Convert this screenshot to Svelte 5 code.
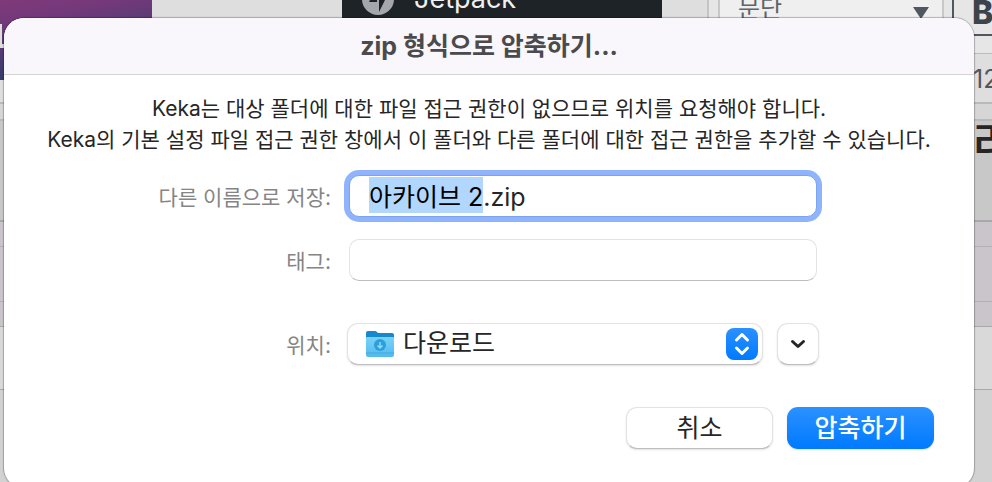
<script lang="ts">
  import { onMount } from "svelte";

  let name = $state("아카이브 2.zip");
  let tags = $state("");
  let place = $state("downloads");
  let nameInput: HTMLInputElement;

  onMount(() => {
    nameInput.focus();
    nameInput.setSelectionRange(0, name.lastIndexOf("."));
  });
</script>

<div class="desktop">
  <div class="page" aria-hidden="true">
    <div class="top">
      <div class="tile"></div>
      <div class="menu">
        <svg class="jetpack" viewBox="0 0 32 32">
          <circle cx="16" cy="16" r="16" fill="#a5a7ab" />
          <path d="M15 3v16H7zM17 29V13h8z" fill="#1d2327" />
        </svg>
        <span>Jetpack</span>
      </div>
      <div class="toolbar">
        <div class="format">
          <span>문단</span>
          <svg class="triangle" viewBox="0 0 16 12">
            <path d="M0 0h16L8 12z" fill="#50575e" />
          </svg>
        </div>
        <div class="bold">B</div>
      </div>
    </div>
    <div class="size-row"><span class="edge">12</span></div>
    <div class="gap-row"></div>
    <div class="heading-row"><span class="edge">라</span></div>
    <div class="band">
      <div class="band-inner"></div>
    </div>
    <div class="row"></div>
    <div class="rest"></div>
  </div>

  <div class="dialog" role="dialog" aria-labelledby="title">
    <h1 class="title" id="title">zip 형식으로 압축하기...</h1>

    <p class="message">
      Keka는 대상 폴더에 대한 파일 접근 권한이 없으므로 위치를 요청해야 합니다.<br />
      Keka의 기본 설정 파일 접근 권한 창에서 이 폴더와 다른 폴더에 대한 접근 권한을 추가할 수 있습니다.
    </p>

    <form onsubmit={(e) => e.preventDefault()}>
      <div class="fields">
        <label for="name">다른 이름으로 저장:</label>
        <input
          class="text focused"
          id="name"
          type="text"
          spellcheck="false"
          autocomplete="off"
          bind:this={nameInput}
          bind:value={name}
        />

        <label for="tags">태그:</label>
        <input class="text" id="tags" type="text" bind:value={tags} />

        <label class="place-label" for="place">위치:</label>
        <div class="place">
          <div class="popup">
            <svg class="folder" viewBox="0 0 30 28">
              <defs>
                <linearGradient id="front" x1="0" y1="0" x2="0" y2="1">
                  <stop offset="0" stop-color="#79d3fa" />
                  <stop offset="1" stop-color="#52b9ee" />
                </linearGradient>
              </defs>
              <path
                d="M1 3q0-2 2-2h7q1 0 2 1l1 1h14q2 0 2 2v8H1z"
                fill="#1489cd"
              />
              <path d="M1 8q0-1 1-1h26q1 0 1 1v17q0 2-2 2H3q-2 0-2-2z" fill="url(#front)" />
              <path d="M1 23h28" stroke="#41a8df" />
              <circle cx="15" cy="15" r="6" fill="#2f9fd9" />
              <path
                d="M15 12v6M12.500 15.500l2.500 2.500 2.500-2.500"
                fill="none"
                stroke="#8bdcff"
                stroke-width="1.500"
              />
            </svg>
            <select id="place" bind:value={place}>
              <option value="downloads">다운로드</option>
            </select>
            <svg class="stepper" viewBox="0 0 32 32">
              <defs>
                <linearGradient id="blue" x1="0" y1="0" x2="0" y2="1">
                  <stop offset="0" stop-color="#2b91ff" />
                  <stop offset="1" stop-color="#007aff" />
                </linearGradient>
              </defs>
              <rect width="32" height="32" rx="8" fill="url(#blue)" />
              <path
                d="M10.500 12L16 6.500l5.500 5.500M10.500 20L16 25.500 21.500 20"
                fill="none"
                stroke="#fff"
                stroke-width="3"
                stroke-linecap="round"
                stroke-linejoin="round"
              />
            </svg>
          </div>
          <button class="expand" type="button" aria-label="펼치기">
            <svg viewBox="0 0 16 10">
              <path
                d="M2.500 2.500L8 7.500l5.500-5"
                fill="none"
                stroke="#262626"
                stroke-width="3"
                stroke-linecap="round"
                stroke-linejoin="round"
              />
            </svg>
          </button>
        </div>
      </div>

      <div class="actions">
        <button class="action" type="button">취소</button>
        <button class="action primary" type="submit">압축하기</button>
      </div>
    </form>
  </div>
</div>

<style>
  :global(body) {
    margin: 0;
  }

  * {
    box-sizing: border-box;
  }

  .desktop {
    display: grid;
    grid-template: 100vh / 100%;
    overflow: hidden;
    font-family: Inter, "Noto Sans CJK KR", sans-serif;
    color: #262626;
  }

  .page,
  .dialog {
    grid-area: 1 / 1;
    min-width: 0;
  }

  /* page behind the dialog */
  .page {
    display: flex;
    flex-direction: column;
    background: #d6d6d6;
  }

  .top {
    display: flex;
    flex: none;
    height: 54px;
    background: #dedede;
    border-bottom: 1px solid #bcbcbc;
  }

  /* hangs over the rows below */
  .tile {
    position: relative;
    width: 152px;
    height: 80px;
    padding-top: 24px;
    background: linear-gradient(170deg, #80397a 0%, #74397a 20%, #2c3c6c 85%);
  }

  .tile::before {
    content: "";
    display: block;
    width: 4px;
    height: 20px;
    border: solid #dedede;
    border-width: 0 0 4px 2px;
  }

  .menu {
    display: flex;
    align-items: flex-start;
    gap: 20px;
    width: 320px;
    margin-left: 190px;
    padding-left: 20px;
    background: #1d2327;
    color: #f0f0f1;
    font-size: 27px;
    line-height: 32px;
  }

  .menu span {
    margin-top: -17px;
  }

  .jetpack {
    width: 32px;
    height: 32px;
    margin-top: -17px;
  }

  .toolbar {
    display: flex;
    flex: 1;
    justify-content: space-between;
    margin-left: 45px;
    border-left: 2px solid #c4c4c4;
    background: #e6e6e6;
  }

  .format {
    display: flex;
    align-items: flex-start;
    justify-content: space-between;
    width: 226px;
    margin-left: 9px;
    padding: 0 13px 0 18px;
    border: solid #c8c8c8;
    border-width: 0 2px;
    background: #efefef;
    color: #606468;
    font-size: 24px;
    line-height: 18px;
  }

  .triangle {
    width: 16px;
    height: 12px;
    margin-top: 7px;
  }

  .bold {
    width: 40px;
    height: 36px;
    padding-left: 18px;
    border: solid #50575e;
    border-width: 0 0 2px 2px;
    font-size: 32px;
    font-weight: 800;
    line-height: 26px;
    color: #3c434a;
  }

  .size-row,
  .heading-row {
    display: flex;
    flex: none;
    justify-content: flex-end;
  }

  .edge {
    width: 19px;
    white-space: nowrap;
  }

  .size-row {
    height: 50px;
    border-bottom: 2px solid #bababa;
    background: #dedede;
    color: #50575e;
    font-size: 25px;
    line-height: 50px;
  }

  .gap-row {
    flex: none;
    height: 17px;
    border-bottom: 2px solid #bababa;
    background: #d6d6d6;
  }

  .heading-row {
    height: 101px;
    border-bottom: 2px solid #a8a8a8;
    background: #c8c8c8;
    font-size: 44px;
    font-weight: 500;
    line-height: 44px;
  }

  .band {
    flex: none;
    height: 105px;
    padding: 24px 0;
    border-bottom: 1px solid #a8a8a8;
    background: #cac4cb;
  }

  .band-inner {
    height: 56px;
    border: solid #b4aeb5;
    border-width: 1px 0;
  }

  .row {
    flex: none;
    height: 63px;
    border-bottom: 1px solid #a8a8a8;
    background: #d9d9d9;
  }

  .rest {
    flex: 1;
    background: #d2d2d2;
  }

  /* save sheet */
  .dialog {
    position: relative;
    min-height: 470px;
    margin: 18px 18px 0 4px;
    overflow: hidden;
    border-radius: 20px;
    background: #fff;
    box-shadow: 0 0 1px 1px rgba(0, 0, 0, 0.25);
  }

  .title {
    margin: 0;
    border-bottom: 1px solid #d5d3d6;
    background: #f9f7fb;
    color: #4b4a4c;
    font-size: 25px;
    font-weight: 700;
    line-height: 56px;
    text-align: center;
  }

  .message {
    margin: 18px 0 0;
    font-size: 21px;
    line-height: 31px;
    text-align: center;
    white-space: nowrap;
  }

  .fields {
    display: grid;
    grid-template-columns: 327px 1fr;
    align-items: center;
    row-gap: 22px;
    column-gap: 16px;
    padding: 20px 155px 0 0;
  }

  label {
    padding-top: 4px;
    color: #858585;
    font-size: 21px;
    line-height: 32px;
    text-align: right;
  }

  .place-label,
  .place {
    margin-top: 20px;
  }

  .text {
    height: 42px;
    min-width: 0;
    margin: 0 2px;
    padding: 0 19px 2px;
    border: 1px solid #e3e3e3;
    border-bottom-color: #bdbdbd;
    border-radius: 10px;
    outline: none;
    background: #fff;
    color: #262626;
    font-family: inherit;
    font-size: 25px;
  }

  .focused {
    border-color: #7ba4ee;
    box-shadow: 0 0 0 5px #8fb4fd;
  }

  .text::selection {
    background: #b2d7ff;
    color: #000;
  }

  .place {
    display: flex;
    gap: 14px;
  }

  .popup,
  .expand,
  .action {
    height: 42px;
    border: 1px solid #e3e3e3;
    border-bottom-color: #bdbdbd;
    border-radius: 11px;
    background: #fff;
    box-shadow: 0 1px 2px rgba(0, 0, 0, 0.12);
  }

  .popup {
    display: flex;
    flex: 1;
    align-items: center;
    padding: 0 4px 0 17px;
  }

  .folder {
    width: 30px;
    height: 28px;
  }

  select {
    flex: 1;
    align-self: stretch;
    padding: 0 0 2px 8px;
    appearance: none;
    border: none;
    outline: none;
    background: transparent;
    color: #262626;
    font-family: inherit;
    font-size: 25px;
  }

  .stepper {
    width: 32px;
    height: 32px;
  }

  .expand {
    display: flex;
    align-items: center;
    justify-content: center;
    width: 42px;
    padding: 0;
  }

  .expand svg {
    width: 16px;
    height: 10px;
  }

  .actions {
    display: flex;
    justify-content: flex-end;
    gap: 14px;
    padding: 42px 40px 0 0;
  }

  .action {
    width: 147px;
    padding: 0 0 5px;
    color: #262626;
    font-family: inherit;
    font-size: 25px;
  }

  .primary {
    border-color: transparent;
    background: linear-gradient(#2b91ff, #007aff) border-box;
    color: #fff;
    font-weight: 500;
  }
</style>
